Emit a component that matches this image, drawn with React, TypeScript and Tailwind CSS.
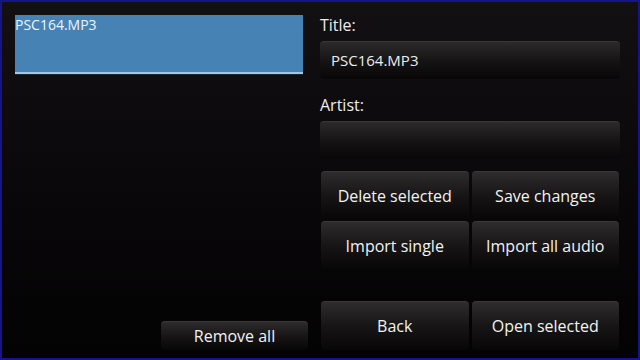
import React from "react";

const font = { fontFamily: '"Open Sans", "DejaVu Sans", sans-serif' };

function Btn({ label, className = "" }: { label: string; className?: string }) {
  return (
    <div
      className={
        "flex items-center justify-center rounded-[4px] bg-gradient-to-b from-[#2e2c2d] via-[#171516] to-[#080708] border-t border-[#3a3839] text-[#f2f2f2] text-[16px] " +
        className
      }
    >
      {label}
    </div>
  );
}

function Field({ value }: { value: string }) {
  return (
    <div className="h-[38px] rounded-[4px] bg-gradient-to-b from-[#2c2a2b] via-[#161415] to-[#080708] border-t border-[#383637] flex items-center pl-[11px] text-[15px] text-[#ececec]">
      {value}
    </div>
  );
}

export default function App() {
  return (
    <div
      style={font}
      className="w-[640px] h-[360px] border-2 border-[#16148c] bg-gradient-to-b from-[#121012] to-[#040304] flex overflow-hidden"
    >
      <div className="w-[306px] pl-[13px] flex flex-col">
        <div className="mt-[13px] w-[288px] h-[59px] bg-[#4682b4] border-b-2 border-[#a9c5de] shadow-[0_1px_0_#1a2530] text-[#eef4fa] text-[14px] leading-[20px]">
          PSC164.MP3
        </div>
        <div className="flex-1" />
        <Btn label="Remove all" className="ml-[146px] w-[147px] h-[29px] mb-[8px]" />
      </div>
      <div className="ml-[12px] w-[300px] flex flex-col">
        <div className="mt-[12px] h-[22px] leading-[22px] text-[16px] text-[#ededed]">Title:</div>
        <div className="mt-[5px]">
          <Field value="PSC164.MP3" />
        </div>
        <div className="mt-[15px] h-[22px] leading-[22px] text-[16px] text-[#ededed]">Artist:</div>
        <div className="mt-[5px]">
          <Field value="" />
        </div>
        <div className="mt-[12px] ml-[1px] w-[298px] grid grid-cols-2 gap-x-[3px] gap-y-[2px]">
          <Btn label="Delete selected" className="h-[48px]" />
          <Btn label="Save changes" className="h-[48px]" />
          <Btn label="Import single" className="h-[48px]" />
          <Btn label="Import all audio" className="h-[48px]" />
        </div>
        <div className="mt-[32px] ml-[1px] w-[298px] grid grid-cols-2 gap-x-[3px]">
          <Btn label="Back" className="h-[49px]" />
          <Btn label="Open selected" className="h-[49px]" />
        </div>
      </div>
    </div>
  );
}
